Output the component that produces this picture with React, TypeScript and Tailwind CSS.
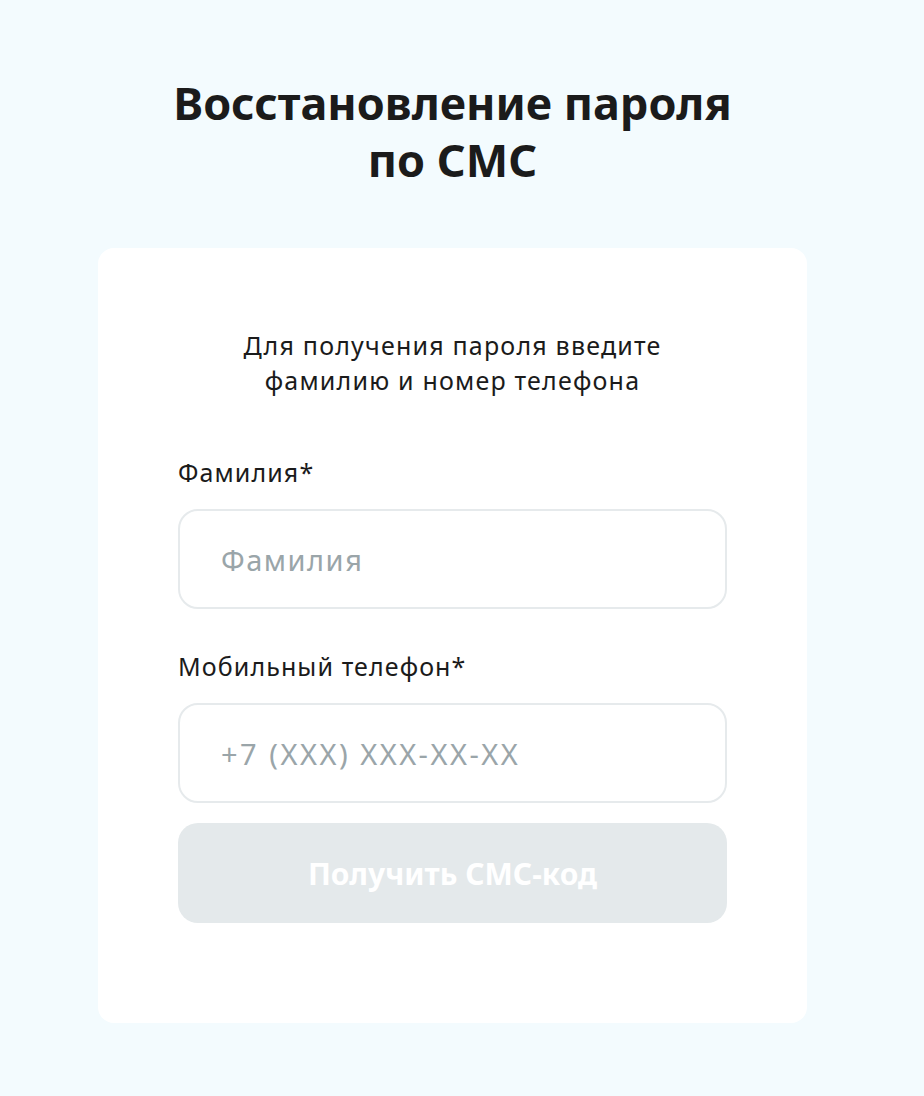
export default function App() {
  return (
    <div
      className="min-h-[1096px] w-full bg-[#f3fbfe] flex flex-col items-center pt-[74px] pr-[19px]"
      style={{ fontFamily: '"Noto Sans", "Open Sans", sans-serif' }}
    >
      <h1 className="text-[45px] leading-[57px] font-bold text-[#1b1b1b] text-center">
        Восстановление пароля
        <br />
        по СМС
      </h1>

      <div className="mt-[60px] w-[709px] bg-white rounded-[16px] px-[80px] pt-[80px] pb-[100px]">
        <p className="text-[25px] leading-[35px] tracking-[1.2px] text-[#1b1b1b] text-center">
          Для получения пароля введите
          <br />
          фамилию и номер телефона
        </p>

        <div className="mt-[58px] flex flex-col">
          <label className="text-[25px] leading-[32px] tracking-[1.1px] text-[#1b1b1b]">Фамилия*</label>
          <input
            className="mt-[21px] h-[100px] w-full rounded-[20px] border-2 border-[#e6eaec] px-[41px] text-[29px] tracking-[1.5px] text-[#1b1b1b] placeholder:text-[#9aa5a9] outline-none"
            placeholder="Фамилия"
          />

          <label className="mt-[41px] text-[25px] leading-[32px] tracking-[1.1px] text-[#1b1b1b]">Мобильный телефон*</label>
          <input
            className="mt-[21px] h-[100px] w-full rounded-[20px] border-2 border-[#e6eaec] px-[41px] text-[29px] tracking-[2.5px] text-[#1b1b1b] placeholder:text-[#9aa5a9] outline-none"
            placeholder="+7 (XXX) XXX-XX-XX"
          />

          <button
            disabled
            className="mt-[20px] h-[100px] w-full rounded-[20px] bg-[#e4e9eb] text-white text-[30px] font-bold"
          >
            Получить СМС-код
          </button>
        </div>
      </div>
    </div>
  )
}
